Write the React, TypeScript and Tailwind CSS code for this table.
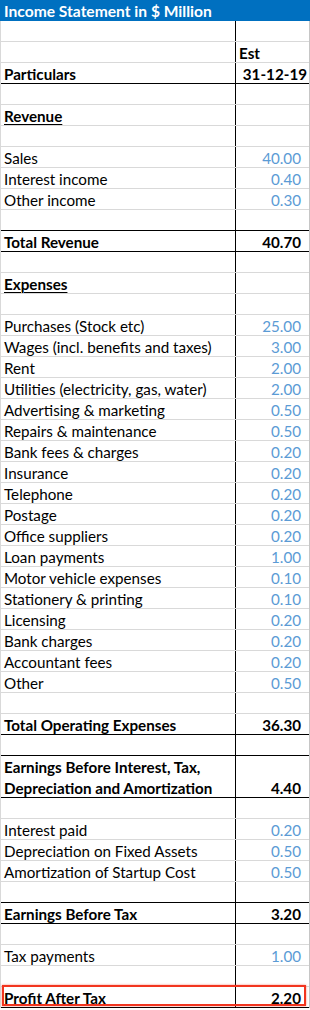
import React from "react";

type Row =
  | { kind: "blank"; line?: "black" }
  | { kind: "head"; left?: string; right?: string; line?: "black" }
  | { kind: "section"; label: string }
  | { kind: "item"; label: string; value: string }
  | { kind: "total"; label: string; value: string; tall?: string }
  | { kind: "final"; label: string; value: string };

const ROWS: Row[] = [
  { kind: "blank" },
  { kind: "head", right: "Est" },
  { kind: "head", left: "Particulars", right: "31-12-19", line: "black" },
  { kind: "blank" },
  { kind: "section", label: "Revenue" },
  { kind: "blank" },
  { kind: "item", label: "Sales", value: "40.00" },
  { kind: "item", label: "Interest income", value: "0.40" },
  { kind: "item", label: "Other income", value: "0.30" },
  { kind: "blank", line: "black" },
  { kind: "total", label: "Total Revenue", value: "40.70" },
  { kind: "blank" },
  { kind: "section", label: "Expenses" },
  { kind: "blank" },
  { kind: "item", label: "Purchases (Stock etc)", value: "25.00" },
  { kind: "item", label: "Wages (incl. benefits and taxes)", value: "3.00" },
  { kind: "item", label: "Rent", value: "2.00" },
  { kind: "item", label: "Utilities (electricity, gas, water)", value: "2.00" },
  { kind: "item", label: "Advertising & marketing", value: "0.50" },
  { kind: "item", label: "Repairs & maintenance", value: "0.50" },
  { kind: "item", label: "Bank fees & charges", value: "0.20" },
  { kind: "item", label: "Insurance", value: "0.20" },
  { kind: "item", label: "Telephone", value: "0.20" },
  { kind: "item", label: "Postage", value: "0.20" },
  { kind: "item", label: "Office suppliers", value: "0.20" },
  { kind: "item", label: "Loan payments", value: "1.00" },
  { kind: "item", label: "Motor vehicle expenses", value: "0.10" },
  { kind: "item", label: "Stationery & printing", value: "0.10" },
  { kind: "item", label: "Licensing", value: "0.20" },
  { kind: "item", label: "Bank charges", value: "0.20" },
  { kind: "item", label: "Accountant fees", value: "0.20" },
  { kind: "item", label: "Other", value: "0.50" },
  { kind: "blank" },
  { kind: "total", label: "Total Operating Expenses", value: "36.30" },
  { kind: "blank", line: "black" },
  {
    kind: "total",
    label: "Earnings Before Interest, Tax,",
    tall: "Depreciation and Amortization",
    value: "4.40",
  },
  { kind: "blank" },
  { kind: "item", label: "Interest paid", value: "0.20" },
  { kind: "item", label: "Depreciation on Fixed Assets", value: "0.50" },
  { kind: "item", label: "Amortization of Startup Cost", value: "0.50" },
  { kind: "blank", line: "black" },
  { kind: "total", label: "Earnings Before Tax", value: "3.20" },
  { kind: "blank" },
  { kind: "item", label: "Tax payments", value: "1.00" },
  { kind: "blank" },
  { kind: "final", label: "Profit After Tax", value: "2.20" },
];

function SheetRow({ row }: { row: Row }) {
  const black =
    row.kind === "total" ||
    row.kind === "final" ||
    ("line" in row && row.line === "black");
  const lineCls = black ? "border-b-black" : "border-b-[#d9d9d9]";

  if (row.kind === "total" && row.tall) {
    return (
      <div className={`flex h-[42px] border-b ${lineCls}`}>
        <div className="w-[235px] shrink-0 border-r border-black pt-[1px] pl-[3px] font-bold leading-[20px] whitespace-nowrap">
          <div className="h-[21px] leading-[21px]">{row.label}</div>
          <div className="leading-[20px]">{row.tall}</div>
        </div>
        <div className="flex flex-1 items-end justify-end pr-[8px] font-bold leading-[17px]">
          {row.value}
        </div>
      </div>
    );
  }

  let left: React.ReactNode = null;
  let right: React.ReactNode = null;
  let rightCls = "justify-end pr-[8px]";

  if (row.kind === "head") {
    left = <span className="font-bold">{row.left}</span>;
    if (row.right === "Est") {
      rightCls = "justify-start pl-[3px]";
      right = <span className="font-bold">Est</span>;
    } else {
      rightCls = "justify-end pr-[2px]";
      right = <span className="font-bold">{row.right}</span>;
    }
  } else if (row.kind === "section") {
    left = (
      <span className="font-bold underline decoration-1 underline-offset-[2px]">
        {row.label}
      </span>
    );
  } else if (row.kind === "item") {
    left = row.label;
    right = <span className="text-[#5b9bd5]">{row.value}</span>;
  } else if (row.kind === "total" || row.kind === "final") {
    left = <span className="font-bold">{row.label}</span>;
    right = <span className="font-bold">{row.value}</span>;
  }

  return (
    <div className={`relative flex h-[21px] border-b ${lineCls}`}>
      <div className="flex w-[235px] shrink-0 items-start border-r border-black pt-[0.5px] pl-[3px] leading-[20px] whitespace-nowrap">
        {left}
      </div>
      <div className={`flex flex-1 items-start pt-[0.5px] leading-[20px] whitespace-nowrap ${rightCls}`}>
        {right}
      </div>
      {row.kind === "final" && (
        <div className="pointer-events-none absolute top-[-2px] bottom-[1px] left-[1px] right-[3px] border-2 border-[#f2351f] shadow-[0_0_2px_rgba(242,53,31,0.6)]" />
      )}
    </div>
  );
}

export default function App() {
  return (
    <div
      className="w-[310px] bg-white text-[15.2px] text-black"
      style={{ fontFamily: "Lato, 'Liberation Sans', sans-serif" }}
    >
      <div className="h-[21px] overflow-hidden bg-[#0070c0] pl-[4px] text-[15.6px] leading-[22px] font-bold whitespace-nowrap text-white">
        Income Statement in $ Million
      </div>
      <div className="border-l border-r border-l-[#d9d9d9] border-r-[#c6c6c6]">
        {ROWS.map((r, i) => (
          <SheetRow key={i} row={r} />
        ))}
      </div>
    </div>
  );
}
